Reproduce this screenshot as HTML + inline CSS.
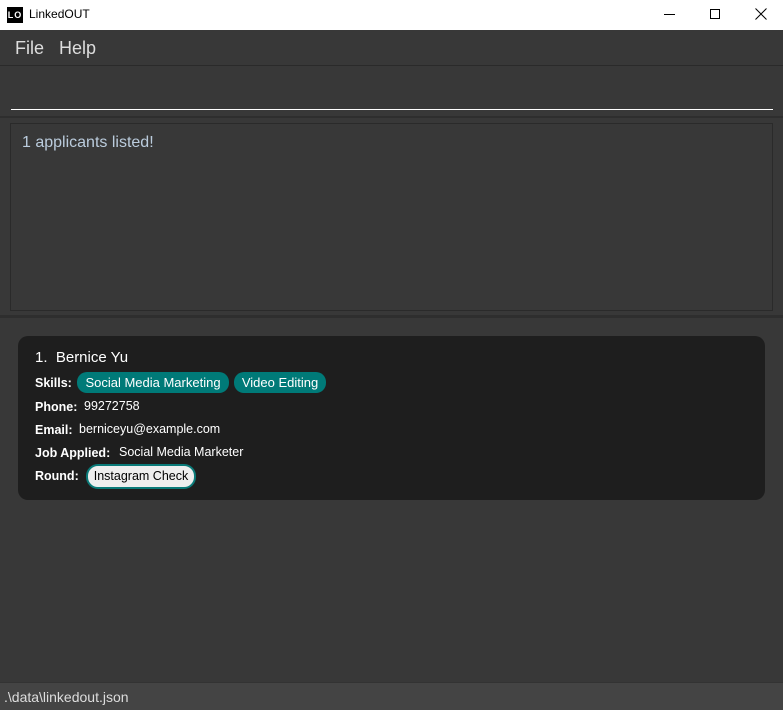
<!DOCTYPE html><html><head><style>
body{margin:0;width:783px;height:710px;background:#383838;font-family:"Liberation Sans",sans-serif;position:relative;overflow:hidden}
div{position:absolute;box-sizing:border-box}
.lbl{font-weight:bold;color:#fff;font-size:12.5px}
.v{color:#fff;font-size:12.5px}
.tag{background:#007a78;color:#fff;border-radius:10px;font-size:13px;height:21px;line-height:21px;text-align:center}
</style></head><body>
<div style="left:0;top:0;width:783px;height:30px;background:#fff"></div>
<div style="left:7px;top:7px;width:16px;height:16px;background:#000;color:#fff;font-size:9px;font-weight:bold;line-height:16px;text-align:center;letter-spacing:1px">LO</div>
<div style="left:29px;top:7px;font-size:12px;color:#000">LinkedOUT</div>
<div style="left:664px;top:14px;width:11px;height:1px;background:#000"></div>
<div style="left:710px;top:9px;width:10px;height:10px;border:1px solid #000"></div>
<svg style="position:absolute;left:755px;top:8px" width="12" height="12"><path d="M0.5 0.5L11.5 11.5M11.5 0.5L0.5 11.5" stroke="#000" stroke-width="1"/></svg>
<div style="left:0;top:30px;width:783px;height:36px;background:#383838;border-bottom:1px solid #2a2a2a"></div>
<div style="left:15px;top:38px;font-size:18px;color:#ddd">File</div>
<div style="left:59px;top:38px;font-size:18px;color:#ddd">Help</div>
<div style="left:11px;top:109px;width:762px;height:1px;background:#fff"></div>
<div style="left:0;top:116px;width:783px;height:2px;background:#2e2e2e"></div>
<div style="left:10px;top:123px;width:763px;height:188px;border:1px solid #2a2a2a"></div>
<div style="left:22px;top:134px;font-size:16px;color:#bcd">1 applicants listed!</div>
<div style="left:0;top:315px;width:783px;height:3px;background:#2e2e2e"></div>
<div style="left:18px;top:336px;width:747px;height:164px;background:#1e1e1e;border-radius:10px"></div>
<div style="left:35px;top:349px;font-size:15px;color:#fff">1.&nbsp;&nbsp;Bernice Yu</div>
<div class="lbl" style="left:35px;top:376px">Skills:</div>
<div class="tag" style="left:77px;top:372px;width:152px">Social Media Marketing</div>
<div class="tag" style="left:234px;top:372px;width:92px">Video Editing</div>
<div class="lbl" style="left:35px;top:400px">Phone:</div><div class="v" style="left:84px;top:399px">99272758</div>
<div class="lbl" style="left:35px;top:423px">Email:</div><div class="v" style="left:79px;top:422px">berniceyu@example.com</div>
<div class="lbl" style="left:35px;top:446px">Job Applied:</div><div class="v" style="left:119px;top:445px">Social Media Marketer</div>
<div class="lbl" style="left:35px;top:469px">Round:</div>
<div style="left:86px;top:464px;width:110px;height:25px;border:2px solid #0a7a78;border-radius:12px;background:#eee;color:#000;font-size:12.5px;line-height:21px;text-align:center">Instagram Check</div>
<div style="left:0;top:682px;width:783px;height:28px;background:#444;border-top:1px solid #333"></div>
<div style="left:4px;top:689px;font-size:14px;color:#ddd">.\data\linkedout.json</div>
</body></html>
